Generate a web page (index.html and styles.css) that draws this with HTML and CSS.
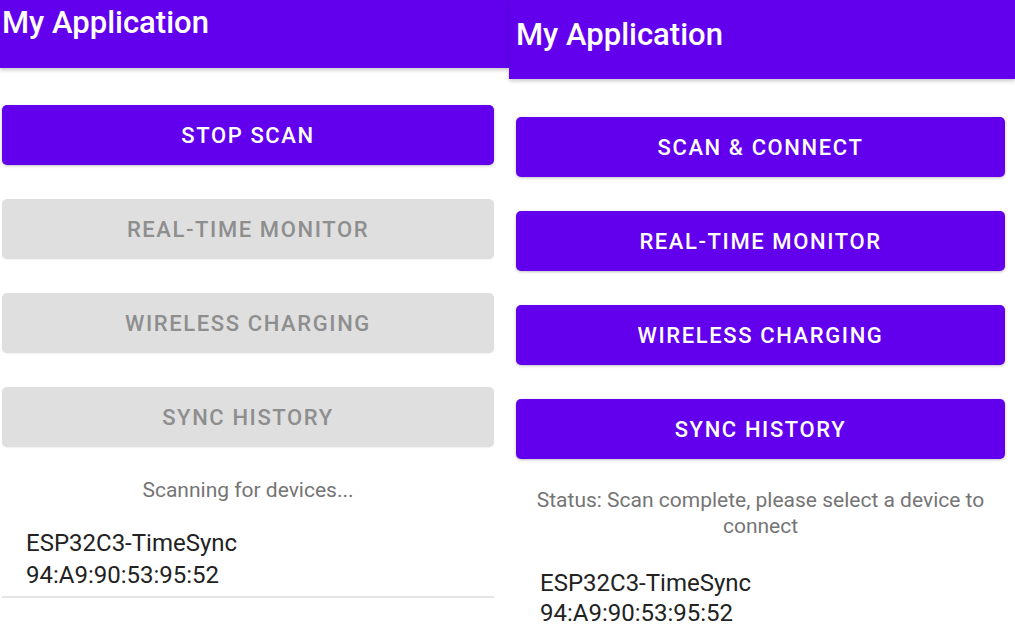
FILE: index.html
```html
<!DOCTYPE html>
<html>
<head>
<meta charset="utf-8">
<link rel="stylesheet" href="styles.css">
</head>
<body>
<div class="screens">
  <section class="screen screen-left">
    <header class="appbar appbar-left"><h1 class="title">My Application</h1></header>
    <div class="content content-left">
      <button class="btn">STOP SCAN</button>
      <button class="btn btn-disabled">REAL-TIME MONITOR</button>
      <button class="btn btn-disabled">WIRELESS CHARGING</button>
      <button class="btn btn-disabled">SYNC HISTORY</button>
      <p class="status status-left">Scanning for devices...</p>
      <div class="device device-left">
        <div class="device-name">ESP32C3-TimeSync</div>
        <div class="device-addr">94:A9:90:53:95:52</div>
      </div>
    </div>
  </section>
  <section class="screen screen-right">
    <header class="appbar appbar-right"><h1 class="title">My Application</h1></header>
    <div class="content content-right">
      <button class="btn">SCAN &amp; CONNECT</button>
      <button class="btn">REAL-TIME MONITOR</button>
      <button class="btn">WIRELESS CHARGING</button>
      <button class="btn">SYNC HISTORY</button>
      <p class="status status-right">Status: Scan complete, please select a device to connect</p>
      <div class="device device-right">
        <div class="device-name">ESP32C3-TimeSync</div>
        <div class="device-addr">94:A9:90:53:95:52</div>
      </div>
    </div>
  </section>
</div>
</body>
</html>
```

FILE: styles.css
```css
* { box-sizing: border-box; }
html, body {
  margin: 0;
  padding: 0;
  background: #ffffff;
  font-family: Roboto, "Noto Sans", sans-serif;
  overflow: hidden;
}
.screens {
  display: flex;
  width: 1015px;
  height: 632px;
}
.screen {
  display: flex;
  flex-direction: column;
  background: #fff;
}
.screen-left { width: 509px; }
.screen-right { width: 506px; }

.appbar {
  background: #6200ee;
  color: #fff;
  box-shadow: 0 2px 4px rgba(0,0,0,0.22);
  position: relative;
  z-index: 1;
}
.appbar-left { height: 68px; padding: 3px 0 0 2px; }
.appbar-right { height: 79px; padding: 15px 0 0 7px; }
.title {
  margin: 0;
  font-size: 31px;
  font-weight: 500;
  line-height: 40px;
  letter-spacing: 0;
}

.content {
  display: flex;
  flex-direction: column;
}
.content-left { padding: 37px 15px 0 2px; }
.content-right { padding: 38px 10px 0 7px; }

.btn {
  height: 60px;
  border: none;
  border-radius: 5px;
  background: #6200ee;
  color: #fff;
  font-family: Roboto, sans-serif;
  font-weight: 500;
  font-size: 22px;
  letter-spacing: 1.6px;
  margin: 0 0 34px 0;
  box-shadow: 0 1px 3px rgba(0,0,0,0.25);
  padding: 0;
}
.btn-disabled {
  background: #dfdfdf;
  color: #8e8e8e;
  box-shadow: 0 1px 2px rgba(0,0,0,0.06);
}

.status {
  margin: 0;
  text-align: center;
  color: #757575;
  font-size: 21px;
  line-height: 26px;
}
.status-left { margin-top: -4px; }
.status-right { margin-top: -6px; }

.device {
  color: #222;
  font-size: 24px;
}
.device-left {
  margin-top: 24px;
  padding: 0 0 5px 24px;
  line-height: 32px;
  border-bottom: 2px solid #e4e4e4;
}
.device-right {
  margin-top: 29px;
  padding-left: 24px;
  line-height: 30px;
}
```
